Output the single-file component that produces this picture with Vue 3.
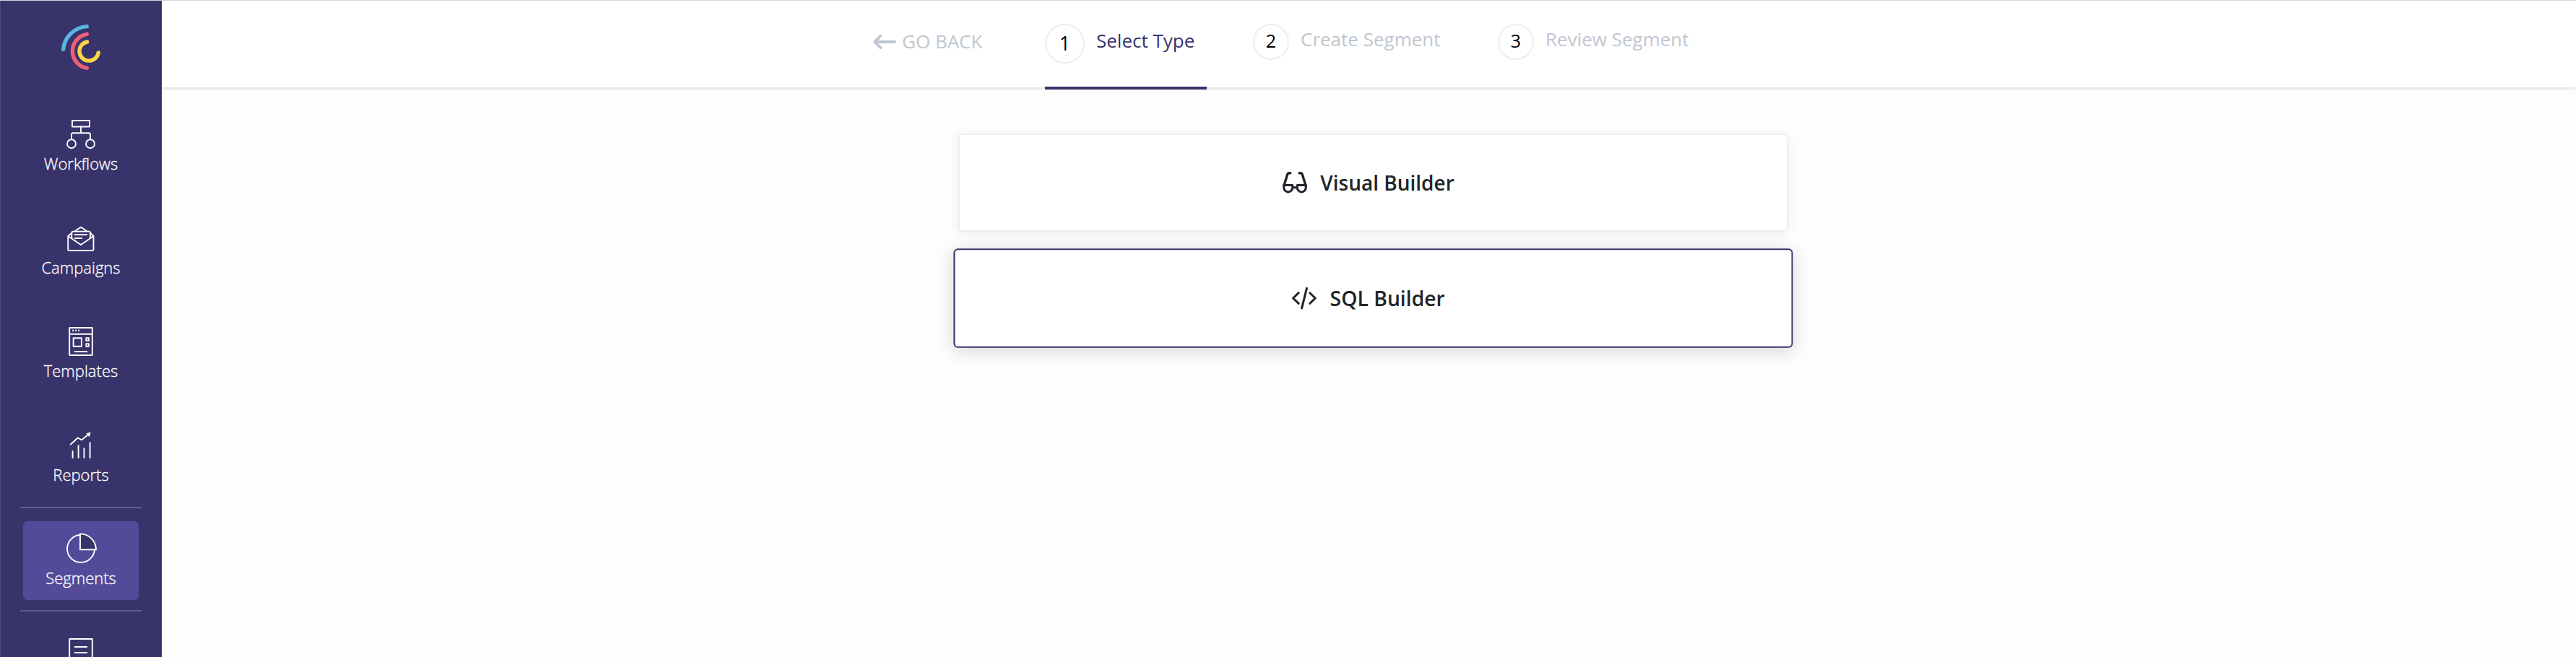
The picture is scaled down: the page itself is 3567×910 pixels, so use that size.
<script setup>
const nav = [
  { id: 'workflows', label: 'Workflows' },
  { id: 'campaigns', label: 'Campaigns' },
  { id: 'templates', label: 'Templates' },
  { id: 'reports', label: 'Reports' },
  { id: 'segments', label: 'Segments', active: true },
  { id: 'content', label: '' },
]
const steps = [
  { n: 1, label: 'Select Type', active: true },
  { n: 2, label: 'Create Segment' },
  { n: 3, label: 'Review Segment' },
]
</script>

<template>
  <div class="app">
    <aside class="sidebar">
      <svg class="logo" width="64" height="72" viewBox="80 30 64 72" fill="none" stroke-width="5.4" stroke-linecap="round">
        <path d="M120.3 36.6A35 35 0 0 0 87.7 68.3" stroke="#5bb5e2" />
        <path d="M120.3 47.4A23.7 23.7 0 0 0 120.3 94.2" stroke="#ef5e78" />
        <path d="M120.6 58A13.2 13.2 0 1 0 136.2 73" stroke="#fdd247" />
      </svg>
      <nav class="nav">
        <template v-for="item in nav" :key="item.id">
          <div v-if="item.id === 'segments' || item.id === 'content'" class="divider"></div>
          <a class="item" :class="{ active: item.active }">
            <svg class="icon" width="48" height="48" viewBox="0 0 48 48" fill="none" stroke="#fff" stroke-width="1.9" stroke-linecap="round" stroke-linejoin="round">
              <template v-if="item.id === 'workflows'">
                <rect x="12" y="5" width="24" height="8.5" />
                <path d="M24 13.5V22.3M11 31V24.3Q11 22.3 13 22.3H35Q37 22.3 37 24.3V31" />
                <circle cx="11" cy="37.2" r="6" />
                <circle cx="37" cy="37.2" r="6" />
              </template>
              <template v-else-if="item.id === 'campaigns'">
                <path d="M6.2 21V39Q6.2 41 8.2 41H39.5Q41.5 41 41.5 39V21L24 33L6.2 21L11.5 16.5M41.5 21L37 16.5M16 14L24 8.6L32 14" />
                <path d="M11.3 24V16.3Q11.3 14.6 13 14.6H35.2Q37 14.6 37 16.3V24" />
                <path d="M15.7 19H32.3M15.7 24H25.2" />
              </template>
              <template v-else-if="item.id === 'templates'">
                <rect x="8.2" y="5" width="31.6" height="38" rx="0.5" />
                <path d="M8.2 13.7H39.8M15.7 38H32.3" />
                <rect x="13.6" y="19.3" width="11.3" height="11.4" />
                <rect x="31.3" y="19.3" width="3.6" height="3.6" />
                <rect x="31.3" y="27.1" width="3.6" height="3.6" />
                <path d="M12 8.8H14M16 8.8H18M20 8.8H22" stroke-linecap="butt" />
              </template>
              <template v-else-if="item.id === 'reports'">
                <path d="M12.6 41V32M20.6 41V24M28.4 41V28M36.6 41V20" />
                <path d="M9.8 22.5L19.7 13.5L25.3 16.3L34.5 8.5" />
                <path d="M36.6 6.4L31.8 7.8L35.2 11.4Z" fill="#fff" stroke-width="1" />
              </template>
              <template v-else-if="item.id === 'segments'">
                <circle cx="24" cy="24" r="19" />
                <path d="M23 3.4A22 22 0 0 1 45 25.3H23Z" fill="#39336b" />
              </template>
              <template v-else>
                <rect x="8.2" y="6" width="31.6" height="38" rx="0.5" />
                <path d="M15.7 17H32.3M15.7 25H32.3" />
              </template>
            </svg>
            <span class="label">{{ item.label }}</span>
          </a>
        </template>
      </nav>
    </aside>

    <div class="main">
      <header class="header">
        <a class="back">
          <svg width="32" height="22" viewBox="0 0 32 22" fill="none" stroke="#bfc6d0" stroke-width="3.8" stroke-linecap="round" stroke-linejoin="round">
            <path d="M10.3 2.8L2.3 11L10.3 19.2M3 11H30" />
          </svg>
          <span>GO BACK</span>
        </a>
        <div v-for="s in steps" :key="s.n" class="step" :class="{ current: s.active }">
          <span class="num">{{ s.n }}</span>
          <span class="step-label">{{ s.label }}</span>
        </div>
      </header>
      <main class="content">
        <section class="card">
          <svg class="card-icon" width="36" height="32" viewBox="0 0 36 32" fill="none" stroke="#212529" stroke-width="3.4" stroke-linecap="round">
            <path d="M11.8 2.7H9.8Q8.3 2.7 7.8 4.2L2.8 20.5M24.2 2.7H26.2Q27.7 2.7 28.2 4.2L33.2 20.5" />
            <path d="M2.7 19.5H14.8V22.5A6.05 6.4 0 0 1 2.7 22.5ZM21.2 19.5H33.3V22.5A6.05 6.4 0 0 1 21.2 22.5ZM15 22.7H21" stroke-width="3" stroke-linejoin="round" />
          </svg>
          <span>Visual Builder</span>
        </section>
        <section class="card selected">
          <svg class="card-icon" width="36" height="32" viewBox="0 0 36 32" fill="none" stroke="#212529" stroke-width="3" stroke-linecap="round" stroke-linejoin="round">
            <path d="M10.4 8.8L2.8 16L10.4 23.2M25.8 8.8L33.2 16L25.8 23.2M21.5 2.5L14.7 29.7" />
          </svg>
          <span>SQL Builder</span>
        </section>
      </main>
    </div>
  </div>
</template>

<style>
body { margin: 0; overflow: hidden; }
</style>

<style scoped>
.app {
  box-sizing: border-box;
  display: flex;
  width: 3567px;
  height: 910px;
  overflow: hidden;
  border-top: 1px solid #d3d7db;
  background: #fdfdfd;
  font-family: "Open Sans", sans-serif;
}
.sidebar {
  box-sizing: border-box;
  flex: none;
  width: 224px;
  border-left: 1px solid #4b467b;
  background: #39336b;
}
.logo { display: block; margin: 29px 0 46.4px 79px; }
.nav { display: flex; flex-direction: column; }
.item {
  box-sizing: border-box;
  display: flex;
  flex: none;
  flex-direction: column;
  align-items: center;
  width: 160px;
  height: 109px;
  margin: 0 0 34.4px 31px;
  padding-top: 14px;
  border-radius: 6px;
  color: #fff;
}
.item.active { background: #534b99; }
.icon { display: block; flex: none; }
.label { font-size: 22px; font-weight: 300; line-height: 32px; -webkit-text-stroke: 0.3px #fff; }
.divider { flex: none; width: 168px; height: 2px; margin: -20px 0 18px 27px; background: #615c8d; }
.main { display: flex; flex: 1; flex-direction: column; }
.header {
  display: flex;
  flex: none;
  align-items: flex-start;
  height: 120px;
  padding-left: 985px;
  background: #fff;
  box-shadow: 0 2px 4px rgba(0, 0, 0, 0.12);
}
.back { display: flex; align-items: flex-start; width: 238px; height: 36px; margin-top: 38px; color: #bfc6d0; font-size: 26px; line-height: 36px; }
.back svg { margin-top: 8px; }
.back span { margin-left: 8px; }
.step {
  box-sizing: border-box;
  display: flex;
  align-items: flex-start;
  height: 123px;
  padding-top: 32px;
  color: #bfc6d0;
  font-size: 26px;
  line-height: 36px;
}
.step.current { width: 224px; margin-right: 64px; border-bottom: 4px solid #39336b; color: #39336b; }
.step:nth-of-type(2) { width: 339px; }
.num {
  box-sizing: border-box;
  flex: none;
  width: 50px;
  height: 50px;
  border: 2px solid #eee;
  border-radius: 50%;
  color: #000;
  font-size: 25px;
  line-height: 43px;
  text-align: center;
}
.current .num { width: 55px; height: 55px; line-height: 49px; font-size: 27px; }
.step-label { margin: 3px 0 0 16px; white-space: nowrap; }
.current .step-label { margin-top: 5px; }
.content { display: flex; flex-direction: column; gap: 24px; padding: 64px 0 0 1103px; }
.card {
  box-sizing: border-box;
  display: flex;
  align-items: center;
  justify-content: center;
  width: 1149px;
  height: 136px;
  padding-right: 14px;
  border: 2px solid #eee;
  border-radius: 6px;
  background: #fff;
  box-shadow: 0 2px 16px rgba(0, 0, 0, 0.07);
  color: #212529;
  font-size: 28px;
  font-weight: 600;
}
.card-icon { margin-right: 17px; }
.selected { border-color: #39336b; box-shadow: 0 4px 24px rgba(0, 0, 0, 0.16); transform: scale(1.0115); }
</style>
